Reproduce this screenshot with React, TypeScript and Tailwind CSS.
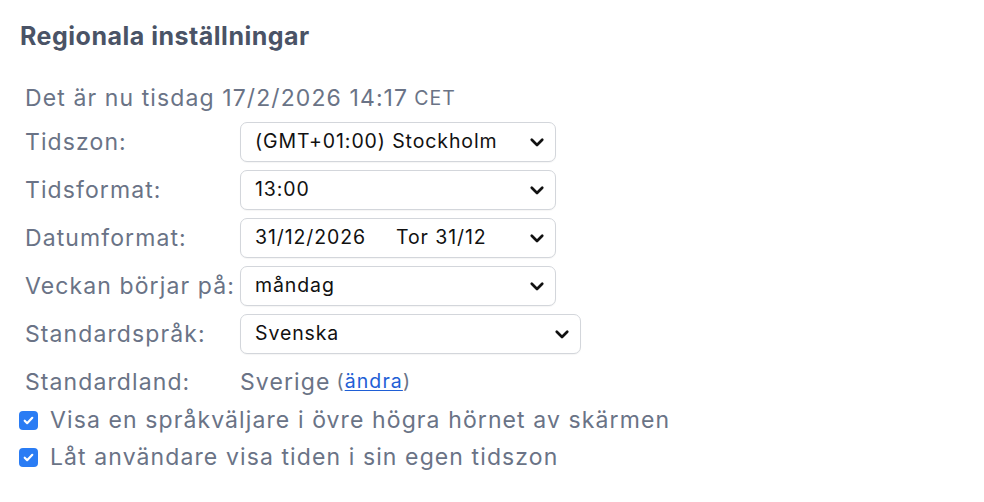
import React from "react";

function Chevron() {
  return (
    <svg width="18" height="18" viewBox="0 0 24 24" fill="none" stroke="#111" strokeWidth="3.6" strokeLinecap="round" strokeLinejoin="round">
      <path d="M5 9l7 7 7-7" />
    </svg>
  );
}

function Select({ children, wide }: { children: React.ReactNode; wide?: boolean }) {
  return (
    <div
      className={`${wide ? "w-[341px]" : "w-[316px]"} h-[40px] border border-[#d3d6db] rounded-[7px] bg-white flex items-center justify-between pl-[14px] pr-[9px] text-[19.5px] tracking-[0.9px] text-[#111] shadow-[0_1px_1px_rgba(0,0,0,0.04)]`}
    >
      <div className="flex items-center">{children}</div>
      <Chevron />
    </div>
  );
}

function Row({ label, children }: { label: string; children: React.ReactNode }) {
  return (
    <div className="flex items-center h-[40px]">
      <div className="w-[215px] shrink-0">{label}</div>
      {children}
    </div>
  );
}

function Check({ label }: { label: string }) {
  return (
    <div className="flex items-center h-[37px]">
      <div className="w-[19px] h-[19px] rounded-[4px] bg-[#2a7cf4] flex items-center justify-center ml-[19px]">
        <svg width="13" height="13" viewBox="0 0 24 24" fill="none" stroke="white" strokeWidth="4" strokeLinecap="round" strokeLinejoin="round">
          <path d="M5 12.5l4.5 4.5L19 7" />
        </svg>
      </div>
      <span className="ml-[12px]">{label}</span>
    </div>
  );
}

export default function App() {
  return (
    <div className="w-[984px] h-[502px] bg-white font-['Inter',sans-serif] text-[#6a7386] text-[23px] tracking-[1.1px] overflow-hidden">
      <div className="pt-5 pl-5">
        <h2 className="text-[25px] leading-8 font-bold tracking-[0.5px] text-[#4a5366]">Regionala inställningar</h2>
      </div>
      <div className="mt-[26px] pl-[25px] h-[40px] flex items-center">
        <span>Det är nu tisdag 17/2/2026 14:17</span>
        <span className="ml-[6px] text-[19.5px] mt-[2px]">CET</span>
      </div>
      <div className="mt-[4px] pl-[25px] flex flex-col gap-[8px]">
        <Row label="Tidszon:">
          <Select>(GMT+01:00) Stockholm</Select>
        </Row>
        <Row label="Tidsformat:">
          <Select>13:00</Select>
        </Row>
        <Row label="Datumformat:">
          <Select>
            <span>31/12/2026</span>
            <span className="ml-[30px]">Tor 31/12</span>
          </Select>
        </Row>
        <Row label="Veckan börjar på:">
          <Select>måndag</Select>
        </Row>
        <Row label="Standardspråk:">
          <Select wide>Svenska</Select>
        </Row>
        <Row label="Standardland:">
          <div className="flex items-center">
            <span>Sverige</span>
            <span className="ml-[6px] text-[19.5px]">
              (<span className="text-[#1f5fd6] underline underline-offset-2">ändra</span>)
            </span>
          </div>
        </Row>
      </div>
      <div>
        <Check label="Visa en språkväljare i övre högra hörnet av skärmen" />
        <Check label="Låt användare visa tiden i sin egen tidszon" />
      </div>
    </div>
  );
}
